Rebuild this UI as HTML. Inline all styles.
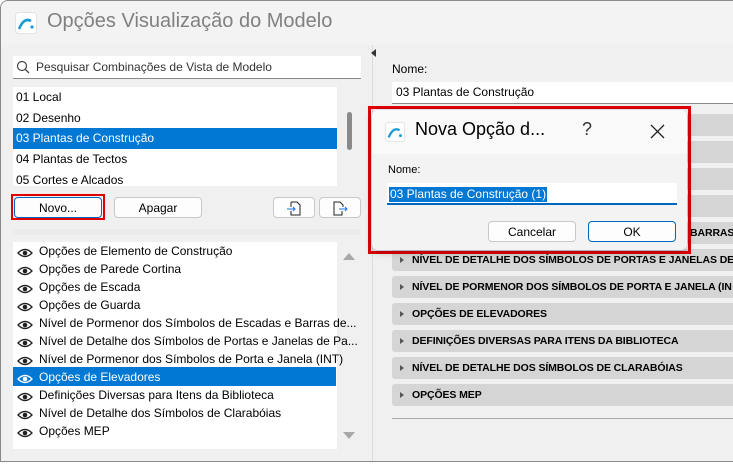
<!DOCTYPE html>
<html><head><meta charset="utf-8"><style>
*{box-sizing:border-box;margin:0;padding:0}
body{width:733px;height:464px;overflow:hidden;background:#fff;font-family:"Segoe UI","Liberation Sans",sans-serif;font-size:12px;color:#000;position:relative}
.win{position:absolute;left:0;top:0;width:740px;height:462px;background:#f0f0f0;border:1px solid #8a8a8a;border-radius:8px 0 0 0;overflow:hidden}
.title{position:absolute;left:0;top:0;right:0;height:44px;background:#f3f3f3}
.abs{position:absolute}
.t{position:absolute;white-space:nowrap}
.list{background:#fff}
.sel{background:#0078d4;color:#fff}
.btn{position:absolute;background:#fdfdfd;border:1px solid #c8c8c8;border-radius:4px;text-align:center;line-height:20px;font-size:12px}
.row{position:absolute;left:391px;width:350px;height:22px;background:#d5d5d5;border-radius:3px;font-weight:bold;font-size:10.5px;line-height:22px;padding-left:20px;white-space:nowrap;letter-spacing:-0.1px}
.row:before{content:"";position:absolute;left:8px;top:8px;border-left:4px solid #555;border-top:3px solid transparent;border-bottom:3px solid transparent}
.eye{position:absolute;left:16px;width:16px;height:10px}
.li{position:absolute;left:38px;white-space:nowrap;font-size:12px}
</style></head><body>
<div class="win">
<div class="title"></div>
<svg class="abs" style="left:14px;top:11px" width="22" height="22" viewBox="0 0 22 22"><rect x="0.5" y="0.5" width="21" height="21" rx="3" fill="#fff" stroke="#e3e3e3"/><path d="M4 17 Q9 5 16 9" stroke="#1a9ad6" stroke-width="2.6" fill="none"/><circle cx="17" cy="15" r="1.6" fill="#1a9ad6"/></svg>
<div class="t" style="left:46px;top:9px;font-size:20px;color:#808080">Opções Visualização do Modelo</div>

<div class="abs" style="left:12px;top:55px;width:348px;height:23px;background:#fff;border-bottom:1px solid #888"></div>
<svg class="abs" style="left:15px;top:59px" width="14" height="14"><circle cx="6" cy="6" r="4.5" stroke="#444" fill="none" stroke-width="1.2"/><path d="M9.3 9.3 L13 13" stroke="#444" stroke-width="1.3"/></svg>
<div class="t" style="left:35px;top:59px;color:#333">Pesquisar Combinações de Vista de Modelo</div>

<div class="abs list" style="left:12px;top:86px;width:324px;height:99px;overflow:hidden">
<div class="t" style="left:3px;top:3px">01 Local</div>
<div class="t" style="left:3px;top:24px">02 Desenho</div>
<div class="abs sel" style="left:0;top:41px;width:324px;height:21px"></div>
<div class="t" style="left:3px;top:44px;color:#fff">03 Plantas de Construção</div>
<div class="t" style="left:3px;top:65px">04 Plantas de Tectos</div>
<div class="t" style="left:3px;top:86px">05 Cortes e Alcados</div>
</div>
<div class="abs" style="left:346px;top:111px;width:5px;height:38px;background:#8a8a8a;border-radius:3px"></div>

<div class="abs" style="left:10px;top:193px;width:94px;height:26px;border:2px solid #e00000"></div>
<div class="btn" style="left:13px;top:196px;width:88px;height:21px;border-color:#0067c0">Novo...</div>
<div class="btn" style="left:113px;top:196px;width:88px;height:21px">Apagar</div>
<div class="btn" style="left:272px;top:196px;width:42px;height:21px"><svg width="16" height="16" style="margin-top:2px"><path d="M5 2 H11 L14 5 V15 H5 V11 M5 7 V2" stroke="#222" fill="none"/><path d="M1 9 H9 M7 7 L9 9 L7 11" stroke="#1a73e8" fill="none"/></svg></div>
<div class="btn" style="left:318px;top:196px;width:42px;height:21px"><svg width="16" height="16" style="margin-top:2px"><path d="M10 11 V15 H2 V2 H8 L11 5 V7" stroke="#222" fill="none"/><path d="M7 9 H15 M13 7 L15 9 L13 11" stroke="#1a73e8" fill="none"/></svg></div>

<div class="abs" style="left:12px;top:228px;width:348px;height:6px;background:#ebebeb"></div>
<div class="abs list" style="left:12px;top:241px;width:324px;height:207px"></div>
<div class="abs sel" style="left:12px;top:366px;width:323px;height:19px"></div>
<svg class="abs" style="left:342px;top:251px" width="12" height="8"><path d="M0 8 L6 1 L12 8Z" fill="#a8a8a8"/></svg>
<svg class="abs" style="left:342px;top:431px" width="12" height="8"><path d="M0 0 L6 7 L12 0Z" fill="#a8a8a8"/></svg>
<div id="eyes"></div>

<div class="abs" style="left:371px;top:44px;width:1px;height:420px;background:#dcdcdc"></div>
<svg class="abs" style="left:370px;top:48px" width="6" height="8"><path d="M5 0 L0 4 L5 8Z" fill="#333"/></svg>

<div class="t" style="left:391px;top:61px">Nome:</div>
<div class="abs" style="left:391px;top:81px;width:350px;height:22px;background:#fff;border-bottom:1px solid #888"></div>
<div class="t" style="left:395px;top:84px">03 Plantas de Construção</div>

<div class="row" style="top:113px"></div>
<div class="row" style="top:140px"></div>
<div class="row" style="top:167px"></div>
<div class="row" style="top:194px"></div>
<div class="row" style="top:221px;padding-left:298px">BARRAS</div>
<div class="row" style="top:248px">NÍVEL DE DETALHE DOS SÍMBOLOS DE PORTAS E JANELAS DE</div>
<div class="row" style="top:275px">NÍVEL DE PORMENOR DOS SÍMBOLOS DE PORTA E JANELA (IN</div>
<div class="row" style="top:302px">OPÇÕES DE ELEVADORES</div>
<div class="row" style="top:329px">DEFINIÇÕES DIVERSAS PARA ITENS DA BIBLIOTECA</div>
<div class="row" style="top:356px">NÍVEL DE DETALHE DOS SÍMBOLOS DE CLARABÓIAS</div>
<div class="row" style="top:383px">OPÇÕES MEP</div>
<div class="abs" style="left:391px;top:417px;width:350px;height:1px;background:#a8a8a8"></div>
</div>

<div class="abs" style="left:368px;top:106px;width:323px;height:148px;border:3px solid #e00000"></div>
<div class="abs" style="left:372px;top:110px;width:315px;height:140px;background:#f3f3f3;border-radius:6px;box-shadow:0 2px 8px rgba(0,0,0,.25)"></div>
<div class="abs" style="left:372px;top:110px;width:315px;height:44px;background:#f9f9f9;border-radius:6px 6px 0 0"></div>
<svg class="abs" style="left:385px;top:122px" width="20" height="20" viewBox="0 0 22 22"><rect x="0.5" y="0.5" width="21" height="21" rx="3" fill="#fff" stroke="#e3e3e3"/><path d="M4 17 Q9 5 16 9" stroke="#1a9ad6" stroke-width="2.6" fill="none"/><circle cx="17" cy="15" r="1.6" fill="#1a9ad6"/></svg>
<div class="t" style="left:415px;top:119px;font-size:18px">Nova Opção d...</div>
<div class="t" style="left:582px;top:119px;font-size:18px;color:#333">?</div>
<svg class="abs" style="left:650px;top:124px" width="15" height="15"><path d="M1 1 L14 14 M14 1 L1 14" stroke="#222" stroke-width="1.3"/></svg>
<div class="t" style="left:388px;top:164px;font-size:11px">Nome:</div>
<div class="abs" style="left:387px;top:183px;width:290px;height:22px;background:#fff;border-bottom:2px solid #0067c0"></div>
<div class="t" style="left:389px;top:187px;color:#fff;background:#0078d4;padding:0 1px;line-height:15px">03 Plantas de Construção (1)</div>
<div class="btn" style="left:488px;top:221px;width:88px;height:21px">Cancelar</div>
<div class="btn" style="left:588px;top:221px;width:88px;height:21px;border-color:#0067c0">OK</div>

<script>
var items=["Opções de Elemento de Construção","Opções de Parede Cortina","Opções de Escada","Opções de Guarda","Nível de Pormenor dos Símbolos de Escadas e Barras de...","Nível de Detalhe dos Símbolos de Portas e Janelas de Pa...","Nível de Pormenor dos Símbolos de Porta e Janela (INT)","Opções de Elevadores","Definições Diversas para Itens da Biblioteca","Nível de Detalhe dos Símbolos de Clarabóias","Opções MEP"];
var h="";
items.forEach(function(s,i){var y=243+i*18;var c=i==7?"#fff":"#000";
h+='<svg class="eye" style="top:'+(y+4)+'px" viewBox="0 0 16 10"><path d="M1 5 Q8 -2 15 5 Q8 12 1 5Z" fill="none" stroke="'+(i==7?"#fff":"#222")+'" stroke-width="1.3"/><circle cx="8" cy="5" r="2.3" fill="'+(i==7?"#fff":"#222")+'"/></svg>';
h+='<div class="li" style="top:'+y+'px;color:'+c+'">'+s+'</div>';});
document.getElementById("eyes").innerHTML=h;
</script>
</body></html>
